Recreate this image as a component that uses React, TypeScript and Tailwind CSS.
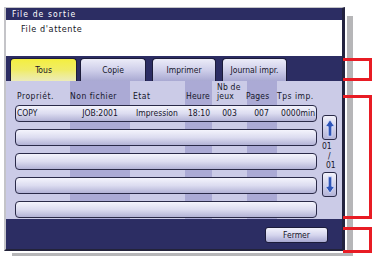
import React from "react";

const font = { fontFamily: '"DejaVu Sans Condensed", "Liberation Sans Narrow", "DejaVu Sans", sans-serif' };

const tabs = [
  { label: "Tous", w: "w-[67px]", ml: "ml-[4px]", active: true },
  { label: "Copie", w: "w-[66px]", ml: "ml-[3px]", active: false },
  { label: "Imprimer", w: "w-[64px]", ml: "ml-[6px]", active: false },
  { label: "Journal impr.", w: "w-[65px]", ml: "ml-[6px]", active: false },
];

function Arrow({ down }: { down?: boolean }) {
  return (
    <svg width="10" height="18" viewBox="0 0 10 18" className={down ? "rotate-180" : ""}>
      <path
        d="M5 0.8 L9.6 7.6 L6.8 7.6 L6.8 17.2 L3.2 17.2 L3.2 7.6 L0.4 7.6 Z"
        fill="#2f55b8"
        stroke="#dfe4ff"
        strokeWidth={0.8}
      />
    </svg>
  );
}

function ScrollButton({ down }: { down?: boolean }) {
  return (
    <div className="w-[15px] h-[25px] rounded-[3px] border border-[#2a2a48] bg-gradient-to-b from-[#f2f2fb] to-[#b4b4d8] flex items-center justify-center">
      <Arrow down={down} />
    </div>
  );
}

function Row({ job }: { job?: boolean }) {
  return (
    <div className="h-[17px] rounded-[4px] border border-[#2a2a48] bg-gradient-to-b from-[#f4f4fc] via-[#dcdcf0] to-[#b3b3d6] flex items-center text-[8.5px] text-[#15152a] leading-none">
      {job && (
        <>
          <span className="w-[53px] pl-[1px]">COPY</span>
          <span className="w-[62px] text-center">JOB:2001</span>
          <span className="w-[54px] pl-[5px]">Impression</span>
          <span className="w-[28px] text-center">18:10</span>
          <span className="w-[33px] text-center">003</span>
          <span className="w-[31px] text-center">007</span>
          <span className="flex-1 text-right pr-[1px]">0000min</span>
        </>
      )}
    </div>
  );
}

export default function App() {
  return (
    <div className="relative w-[373px] h-[256px] bg-white overflow-hidden" style={font}>
      <div className="pt-[7px] pl-[4px]">
        <div className="w-[341px] border-t border-l-2 border-[#c4c4c8] border-r-[3px] border-r-[#23233f] border-b-2 border-b-[#23233a] bg-[#2c2d63] shadow-[2px_2px_0_0_#ffffff,8px_9px_0_0_#b6b6b8]">
          <div className="h-[12px] flex items-center pl-[6px] text-white text-[8.5px] tracking-[1.1px] leading-none">
            File de sortie
          </div>
          <div className="h-[36px] bg-white pl-[15px] pt-[5px] text-[9px] tracking-[0.6px] text-[#151525] leading-none">
            File d'attente
          </div>
          <div className="h-[25px] pt-[2px] flex items-end">
            {tabs.map((t) => (
              <div
                key={t.label}
                className={`${t.w} ${t.ml} h-[23px] rounded-t-[4px] border border-b-0 border-[#1c1c3a] flex items-center justify-center text-[8.5px] text-[#15152a] leading-none ${
                  t.active
                    ? "bg-gradient-to-b from-[#f4ef3c] via-[#f0ec66] to-[#ecebb8]"
                    : "bg-gradient-to-b from-[#ececf8] via-[#cfcfea] to-[#a9a9d2]"
                }`}
              >
                {t.label}
              </div>
            ))}
          </div>
          <div className="h-[138px] flex bg-[linear-gradient(to_right,#cbcbe7_0px,#cbcbe7_64px,#abaad5_64px,#abaad5_124px,#cbcbe7_124px,#cbcbe7_179px,#abaad5_179px,#abaad5_206px,#cbcbe7_206px,#cbcbe7_241px,#abaad5_241px,#abaad5_271px,#cbcbe7_271px)]">
            <div className="ml-[9px] w-[302px] pt-[2px] flex flex-col">
              <div className="h-[18px] mb-[4px] flex items-end text-[8.5px] text-[#15152a] leading-[9px] tracking-[0.5px]">
                <span className="w-[53px] pl-[2px]">Propriét.</span>
                <span className="w-[62px] pl-[2px]">Non fichier</span>
                <span className="w-[54px] pl-[3px]">Etat</span>
                <span className="w-[28px] pl-[2px] tracking-[0.2px]">Heure</span>
                <span className="w-[33px] pl-[5px] flex flex-col tracking-[0.2px]">
                  <span>Nb de</span>
                  <span>jeux</span>
                </span>
                <span className="w-[31px] pl-[1px] tracking-[0.2px]">Pages</span>
                <span className="flex-1 pl-[1px]">Tps imp.</span>
              </div>
              <div className="flex flex-col gap-[7px]">
                <Row job />
                <Row />
                <Row />
                <Row />
                <Row />
              </div>
            </div>
            <div className="ml-[5px] w-[15px] pt-[34px] flex flex-col text-[8.5px] text-[#15152a] leading-none">
              <ScrollButton />
              <div className="h-[32px] flex flex-col pt-[2px]">
                <span>01</span>
                <span className="pl-[6px] mt-[1px]">/</span>
                <span className="pl-[4px] mt-[1px]">01</span>
              </div>
              <ScrollButton down />
            </div>
          </div>
          <div className="h-[30px] flex justify-end pt-[8px] pr-[14px]">
            <div className="w-[63px] h-[16px] rounded-[3px] border border-[#1c1c3a] bg-gradient-to-b from-[#f2f2fb] via-[#d6d6ee] to-[#aaaad2] flex items-center justify-center text-[8.5px] text-[#15152a] leading-none">
              Fermer
            </div>
          </div>
        </div>
      </div>

      <div className="absolute left-[343px] top-[58px] w-[29px] h-[23px] border-t-[3px] border-b-[3px] border-r-[3px] border-[#e81c24]" />
      <div className="absolute left-[343px] top-[95px] w-[29px] h-[124px] border-t-[3px] border-b-[3px] border-r-[3px] border-[#e81c24]" />
      <div className="absolute left-[343px] top-[227px] w-[29px] h-[26px] border-t-[3px] border-b-[3px] border-r-[3px] border-[#e81c24]" />
    </div>
  );
}
